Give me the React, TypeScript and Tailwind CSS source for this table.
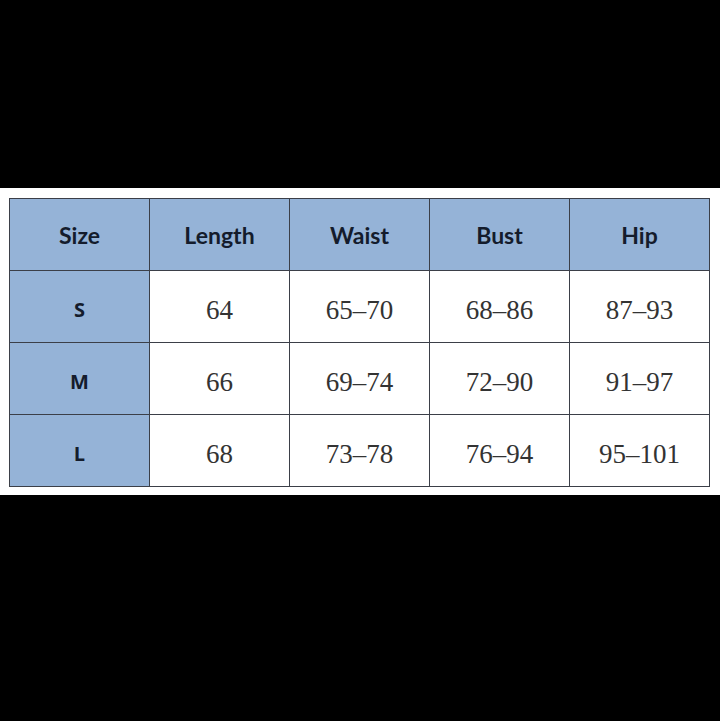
const headers = ["Size", "Length", "Waist", "Bust", "Hip"];

const rows = [
  ["S", "64", "65–70", "68–86", "87–93"],
  ["M", "66", "69–74", "72–90", "91–97"],
  ["L", "68", "73–78", "76–94", "95–101"],
];

export default function App() {
  return (
    <div className="flex h-[721px] w-[720px] flex-col bg-black">
      <div className="h-[188px]" />
      <div className="h-[307px] bg-white pl-[9px] pt-[10px]">
        <table className="border-collapse table-fixed w-[701px]">
          <thead>
            <tr className="h-[72px]">
              {headers.map((h) => (
                <th
                  key={h}
                  className="w-[140px] border border-[#3b3f48] bg-[#95b3d7] p-0 pt-[2px] text-center align-middle text-[23px] font-bold text-[#141c2c] [font-family:Lato,'Open_Sans',sans-serif]"
                >
                  {h}
                </th>
              ))}
            </tr>
          </thead>
          <tbody>
            {rows.map((r) => (
              <tr key={r[0]} className="h-[72px]">
                {r.map((c, i) =>
                  i === 0 ? (
                    <td
                      key={i}
                      className="border border-[#3b3f48] bg-[#95b3d7] p-0 pt-[7px] text-center align-middle text-[20px] font-bold text-[#141c2c] [font-family:'Open_Sans',Lato,sans-serif]"
                    >
                      {c}
                    </td>
                  ) : (
                    <td
                      key={i}
                      className="border border-[#3b3f48] bg-white p-0 pt-[8px] text-center align-middle text-[27px] text-[#333333] [font-family:'Liberation_Serif',serif]"
                    >
                      {c}
                    </td>
                  )
                )}
              </tr>
            ))}
          </tbody>
        </table>
      </div>
      <div className="flex-1" />
    </div>
  );
}
